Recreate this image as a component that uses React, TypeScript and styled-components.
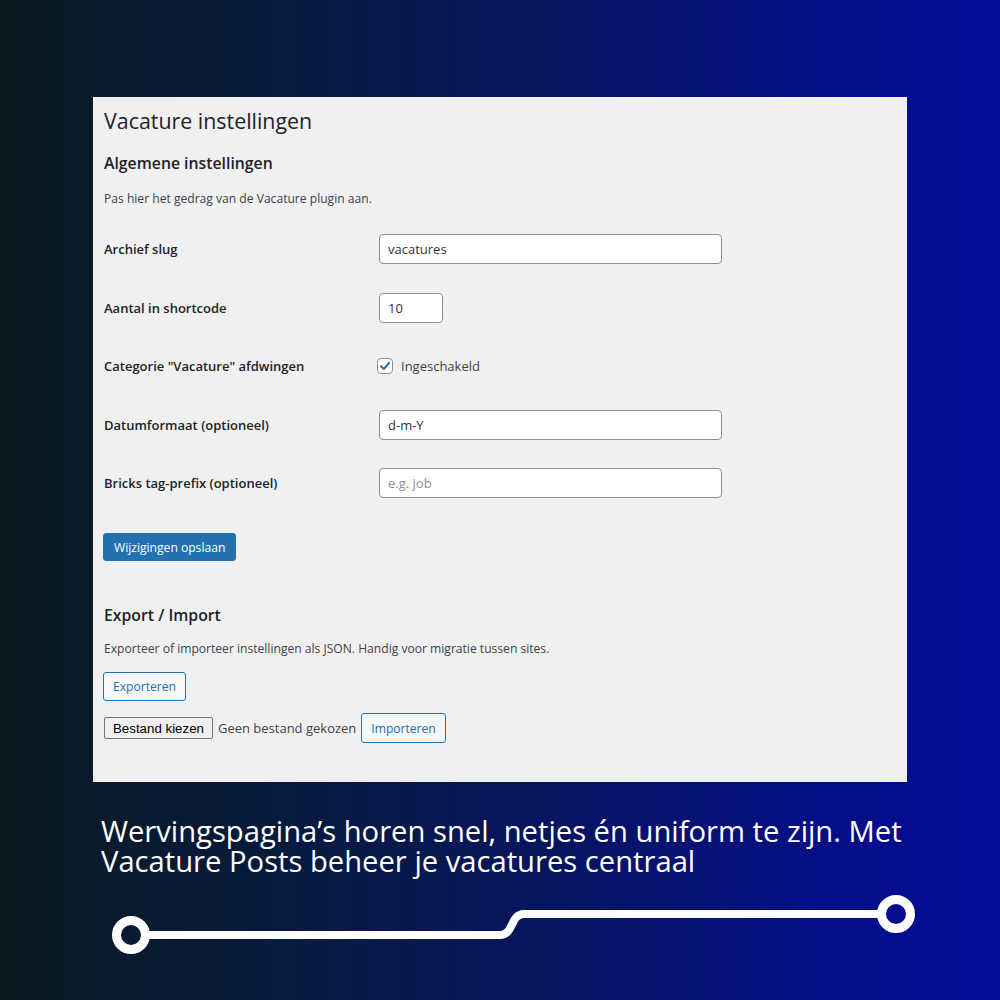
import React from "react";
import styled, { createGlobalStyle } from "styled-components";

const Global = createGlobalStyle`
  html, body { margin: 0; padding: 0; }
  body { width: 1000px; height: 1000px; overflow: hidden; }
  * { box-sizing: border-box; }
`;

const Page = styled.div`
  width: 1000px;
  height: 1000px;
  background: linear-gradient(90deg, #0a1b22 0%, #081a40 30%, #071560 55%, #060f84 80%, #050b98 100%);
  display: flex;
  flex-direction: column;
  padding-top: 97px;
  font-family: "Open Sans", "Noto Sans", sans-serif;
`;

const Panel = styled.div`
  margin: 0 93px;
  background: #f0f0f1;
  padding: 0 10px 39px 10px;
  display: flex;
  flex-direction: column;
  align-items: flex-start;
  color: #1d2327;
  font-size: 12.1px;
`;

const Title = styled.h1`
  margin: 9px 0 0 1px;
  font-size: 21.4px;
  line-height: 30px;
  font-weight: 400;
  color: #1d2327;
`;

const SectionTitle = styled.h2<{ $top: number }>`
  margin: ${(p) => p.$top}px 0 0 1px;
  font-size: 15.8px;
  line-height: 24px;
  font-weight: 600;
  color: #1d2327;
`;

const Desc = styled.p<{ $top: number }>`
  margin: ${(p) => p.$top}px 0 0 1px;
  font-size: 12.1px;
  line-height: 20px;
  color: #3c434a;
`;

const Form = styled.div`
  margin-top: 11px;
  display: grid;
  grid-template-columns: 276px 1fr;
  grid-auto-rows: 58.5px;
  width: 100%;
  align-items: center;
`;

const Label = styled.div`
  padding-left: 1px;
  font-size: 13px;
  font-weight: 600;
  color: #1d2327;
`;

const TextInput = styled.input<{ $w: number }>`
  width: ${(p) => p.$w}px;
  height: 30px;
  border: 1px solid #8c8f94;
  border-radius: 4px;
  background: #fff;
  padding: 0 8px;
  font-family: inherit;
  font-size: 13px;
  color: #2c3338;
  outline: none;
  &::placeholder { color: #8c8f94; }
`;

const CheckWrap = styled.label`
  display: flex;
  align-items: center;
  gap: 8px;
  margin-left: -2px;
  font-size: 13px;
  color: #3c434a;
`;

const CheckBox = styled.span`
  width: 16px;
  height: 16px;
  border: 1px solid #8c8f94;
  border-radius: 4px;
  background: #fff;
  display: flex;
  align-items: center;
  justify-content: center;
`;

const PrimaryButton = styled.button`
  margin-top: 20.5px;
  height: 28px;
  padding: 0 10px;
  background: #2271b1;
  border: 1px solid #2271b1;
  border-radius: 3px;
  color: #fff;
  font-family: inherit;
  font-size: 12.1px;
`;

const SecondaryButton = styled.button<{ $top?: number; $h: number }>`
  margin-top: ${(p) => p.$top ?? 0}px;
  height: ${(p) => p.$h}px;
  padding: 0 9px;
  background: #f6f7f7;
  border: 1px solid #2271b1;
  border-radius: 3px;
  color: #2271b1;
  font-family: inherit;
  font-size: 12.1px;
`;

const ImportRow = styled.div`
  margin-top: 12px;
  display: flex;
  align-items: center;
`;

const FileButton = styled.span`
  height: 22px;
  padding: 0 8px;
  margin-left: 1px;
  display: flex;
  align-items: center;
  background: #efefef;
  border: 1px solid #767676;
  border-radius: 2px;
  font-family: "Liberation Sans", Arial, sans-serif;
  font-size: 13.3px;
  color: #000;
`;

const FileText = styled.span`
  margin: 0 5px 0 5px;
  font-size: 13px;
  color: #3c434a;
`;

const Caption = styled.p`
  margin: 34px 0 0 101px;
  width: 840px;
  font-size: 29.2px;
  line-height: 30px;
  color: #fff;
  font-weight: 400;
`;

const Track = styled.svg`
  display: block;
  margin-top: 15px;
`;

export default function App() {
  return (
    <Page>
      <Global />
      <Panel>
        <Title>Vacature instellingen</Title>
        <SectionTitle $top={15}>Algemene instellingen</SectionTitle>
        <Desc $top={14}>Pas hier het gedrag van de Vacature plugin aan.</Desc>
        <Form>
          <Label>Archief slug</Label>
          <div><TextInput $w={343} defaultValue="vacatures" /></div>
          <Label>Aantal in shortcode</Label>
          <div><TextInput $w={64} defaultValue="10" /></div>
          <Label>Categorie "Vacature" afdwingen</Label>
          <CheckWrap>
            <CheckBox>
              <svg width="14" height="14" viewBox="0 0 14 14">
                <path d="M3 7.2 L5.8 10 L11 3.8" fill="none" stroke="#2271b1" strokeWidth="2" strokeLinecap="round" strokeLinejoin="round" />
              </svg>
            </CheckBox>
            Ingeschakeld
          </CheckWrap>
          <Label>Datumformaat (optioneel)</Label>
          <div><TextInput $w={343} defaultValue="d-m-Y" /></div>
          <Label>Bricks tag-prefix (optioneel)</Label>
          <div><TextInput $w={343} placeholder="e.g. job" /></div>
        </Form>
        <PrimaryButton>Wijzigingen opslaan</PrimaryButton>
        <SectionTitle $top={42}>Export / Import</SectionTitle>
        <Desc $top={12}>Exporteer of importeer instellingen als JSON. Handig voor migratie tussen sites.</Desc>
        <SecondaryButton $top={13} $h={29}>Exporteren</SecondaryButton>
        <ImportRow>
          <FileButton>Bestand kiezen</FileButton>
          <FileText>Geen bestand gekozen</FileText>
          <SecondaryButton $h={30}>Importeren</SecondaryButton>
        </ImportRow>
      </Panel>
      <Caption>Wervingspagina’s horen snel, netjes én uniform te zijn. Met Vacature Posts beheer je vacatures centraal</Caption>
      <Track width="1000" height="70" viewBox="0 890 1000 70">
        <path d="M145 934 H500 C514 934 510 913 524 913 H882" fill="none" stroke="#fff" strokeWidth="8" strokeLinecap="round" />
        <circle cx="131" cy="934" r="14.5" fill="none" stroke="#fff" strokeWidth="9" />
        <circle cx="896" cy="913" r="14.5" fill="none" stroke="#fff" strokeWidth="9" />
      </Track>
    </Page>
  );
}
